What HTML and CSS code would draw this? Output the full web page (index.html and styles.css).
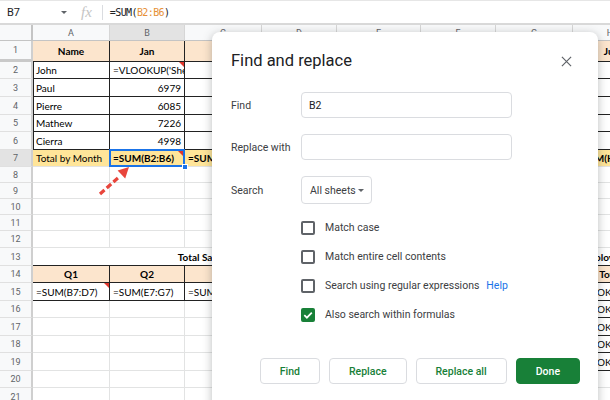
FILE: index.html
```html
<!DOCTYPE html>
<html lang="en">
<head>
<meta charset="utf-8">
<title>Find and replace</title>
<link rel="stylesheet" href="styles.css">
</head>
<body>
<div class="fbar">
  <div class="namebox">B7</div>
  <span class="nb-caret"></span>
  <div class="fx">fx</div>
  <div class="fsep"></div>
  <div class="formula">=SUM(<span class="fref">B2:B6</span>)</div>
</div>
<div class="sheet">
  <div class="r h16">
    <div class="corner"></div>
    <div class="ch">A</div><div class="ch hl">B</div><div class="ch">C</div><div class="ch">D</div><div class="ch">E</div><div class="ch">F</div><div class="ch">G</div><div class="ch">H</div>
  </div>
  <div class="r h21">
    <div class="h frz">1</div>
    <div class="c t or b ctr">Name</div><div class="c t or b ctr">Jan</div><div class="c t or b ctr">Feb</div><div class="c t or b ctr">Mar</div><div class="c t or b ctr">Apr</div><div class="c t or b ctr">May</div><div class="c t or b ctr">Jun</div><div class="c t or b ctr">Jul</div>
  </div>
  <div class="r h17">
    <div class="h">2</div>
    <div class="c t lb">John</div><div class="c t cm">=VLOOKUP('Sheet2'!A2,Sheet2!A:B,2,0)</div><div class="c t"></div><div class="c t"></div><div class="c t"></div><div class="c t"></div><div class="c t"></div><div class="c t"></div>
  </div>
  <div class="r h18">
    <div class="h">3</div>
    <div class="c t lb">Paul</div><div class="c t rt">6979</div><div class="c t"></div><div class="c t"></div><div class="c t"></div><div class="c t"></div><div class="c t"></div><div class="c t"></div>
  </div>
  <div class="r h18">
    <div class="h">4</div>
    <div class="c t lb">Pierre</div><div class="c t rt">6085</div><div class="c t"></div><div class="c t"></div><div class="c t"></div><div class="c t"></div><div class="c t"></div><div class="c t"></div>
  </div>
  <div class="r h17">
    <div class="h">5</div>
    <div class="c t lb">Mathew</div><div class="c t rt">7226</div><div class="c t"></div><div class="c t"></div><div class="c t"></div><div class="c t"></div><div class="c t"></div><div class="c t"></div>
  </div>
  <div class="r h18">
    <div class="h">6</div>
    <div class="c t lb">Cierra</div><div class="c t rt">4998</div><div class="c t"></div><div class="c t"></div><div class="c t"></div><div class="c t"></div><div class="c t"></div><div class="c t"></div>
  </div>
  <div class="r h17">
    <div class="h hl">7</div>
    <div class="c tr ye">Total by Month</div><div class="c tr ye b sel cm">=SUM(B2:B6)<span class="handle"></span></div><div class="c tr ye b">=SUM(C2:C6)</div><div class="c tr ye b">=SUM(D2:D6)</div><div class="c tr ye b">=SUM(E2:E6)</div><div class="c tr ye b">=SUM(F2:F6)</div><div class="c tr ye b">=SUM(G2:G6)</div><div class="c tr ye b">=SUM(H2:H6)</div>
  </div>
  <div class="r h16"><div class="h">8</div><div class="c"></div><div class="c"></div><div class="c"></div><div class="c"></div><div class="c"></div><div class="c"></div><div class="c"></div><div class="c"></div></div>
  <div class="r h16"><div class="h">9</div><div class="c"></div><div class="c"></div><div class="c"></div><div class="c"></div><div class="c"></div><div class="c"></div><div class="c"></div><div class="c"></div></div>
  <div class="r h16"><div class="h">10</div><div class="c"></div><div class="c"></div><div class="c"></div><div class="c"></div><div class="c"></div><div class="c"></div><div class="c"></div><div class="c"></div></div>
  <div class="r h16"><div class="h">11</div><div class="c"></div><div class="c"></div><div class="c"></div><div class="c"></div><div class="c"></div><div class="c"></div><div class="c"></div><div class="c"></div></div>
  <div class="r h17"><div class="h">12</div><div class="c"></div><div class="c"></div><div class="c"></div><div class="c"></div><div class="c"></div><div class="c"></div><div class="c"></div><div class="c"></div></div>
  <div class="r h18">
    <div class="h">13</div>
    <div class="c m5 b ctr tb">Total Sales by Quarter</div><div class="c"></div><div class="c"></div><div class="c b tb emp">Employee Status</div>
  </div>
  <div class="r h17">
    <div class="h">14</div>
    <div class="c t or b ctr">Q1</div><div class="c t or b ctr">Q2</div><div class="c t or b ctr">Q3</div><div class="c t or b ctr">Q4</div><div class="c"></div><div class="c"></div><div class="c"></div><div class="c tb or b ctr">Total</div>
  </div>
  <div class="r h18">
    <div class="h">15</div>
    <div class="c t cm">=SUM(B7:D7)</div><div class="c t">=SUM(E7:G7)</div><div class="c t">=SUM(H7:J7)</div><div class="c t">=SUM(K7:M7)</div><div class="c"></div><div class="c"></div><div class="c"></div><div class="c tb ok">OK</div>
  </div>
  <div class="r h17"><div class="h">16</div><div class="c"></div><div class="c"></div><div class="c"></div><div class="c"></div><div class="c"></div><div class="c"></div><div class="c"></div><div class="c tb ok">OK</div></div>
  <div class="r h18"><div class="h">17</div><div class="c"></div><div class="c"></div><div class="c"></div><div class="c"></div><div class="c"></div><div class="c"></div><div class="c"></div><div class="c tb ok">OK</div></div>
  <div class="r h17"><div class="h">18</div><div class="c"></div><div class="c"></div><div class="c"></div><div class="c"></div><div class="c"></div><div class="c"></div><div class="c"></div><div class="c tb ok">OK</div></div>
  <div class="r h18"><div class="h">19</div><div class="c"></div><div class="c"></div><div class="c"></div><div class="c"></div><div class="c"></div><div class="c"></div><div class="c"></div><div class="c tb ok">OK</div></div>
  <div class="r h17"><div class="h">20</div><div class="c"></div><div class="c"></div><div class="c"></div><div class="c"></div><div class="c"></div><div class="c"></div><div class="c"></div><div class="c"></div></div>
  <div class="r h18"><div class="h">21</div><div class="c"></div><div class="c"></div><div class="c"></div><div class="c"></div><div class="c"></div><div class="c"></div><div class="c"></div><div class="c"></div></div>
</div>

<svg class="arrow" width="40" height="38" viewBox="0 0 40 38" aria-hidden="true">
  <line x1="5" y1="32" x2="24" y2="15" stroke="#e8453c" stroke-width="3.2" stroke-dasharray="6 3"/>
  <polygon points="34,5 30.2,16.6 22.6,8.4" fill="#e8453c"/>
</svg>

<div class="dialog">
  <div class="dlg-head">
    <h1 class="dlg-title">Find and replace</h1>
    <svg class="close" width="11" height="11" viewBox="0 0 12 12" aria-hidden="true"><path d="M1 1L11 11M11 1L1 11" stroke="#5f6368" stroke-width="1.3" fill="none"/></svg>
  </div>
  <div class="form">
    <span class="lbl">Find</span><div class="inp">B2</div>
    <span class="lbl">Replace with</span><div class="inp"></div>
    <span class="lbl">Search</span><div class="select"><span>All sheets</span><span class="sel-caret"></span></div>
  </div>
  <div class="checks">
    <div class="chk"><span class="box"></span><span>Match case</span></div>
    <div class="chk"><span class="box"></span><span>Match entire cell contents</span></div>
    <div class="chk"><span class="box"></span><span>Search using regular expressions</span><span class="help">Help</span></div>
    <div class="chk"><span class="box on"><svg width="10" height="10" viewBox="0 0 10 10" aria-hidden="true"><path d="M1.3 5.2L3.9 7.7L8.8 2.6" stroke="#fff" stroke-width="1.7" fill="none"/></svg></span><span>Also search within formulas</span></div>
  </div>
  <div class="actions">
    <button class="btn">Find</button>
    <button class="btn">Replace</button>
    <button class="btn">Replace all</button>
    <button class="btn primary">Done</button>
  </div>
</div>
</body>
</html>
```
FILE: styles.css
```css
* { box-sizing: border-box; margin: 0; padding: 0; }
html, body { width: 610px; height: 400px; overflow: hidden; background: #fff; }
body { position: relative; font-family: Roboto, "Liberation Sans", Arial, sans-serif; color: #202124; }

/* formula bar */
.fbar { height: 25px; display: flex; align-items: center; border-top: 1px solid #e6e6e6; border-bottom: 2px solid #d9d9d9; }
.namebox { width: 61px; padding-left: 7px; font-size: 11px; color: #202124; }
.nb-caret { width: 0; height: 0; border-left: 3px solid transparent; border-right: 3px solid transparent; border-top: 3px solid #5f6368; }
.fx { margin-left: 14px; font-family: "Liberation Serif", serif; font-style: italic; font-size: 15px; line-height: 1; color: #c4c4c4; }
.fsep { margin-left: 10px; width: 1px; height: 15px; background: #dadce0; }
.formula { margin-left: 7px; font-family: "DejaVu Sans Mono", monospace; font-size: 10px; letter-spacing: -0.6px; color: #202124; }
.fref { color: #e69138; }

/* grid */
.sheet { width: 610px; overflow: hidden; }
.r { display: grid; grid-template-columns: 33px 77px 75px 77px 75px 84px 75px 77px 75px; width: 648px; }
.h16 { height: 16px; }
.h17 { height: 17px; }
.h18 { height: 18px; }
.h21 { height: 21px; }

.corner { background: #f8f9fa; border-right: 2px solid #c4c4c4; border-bottom: 1px solid #c4c4c4; }
.ch { background: #f8f9fa; border-right: 1px solid #d6d6d6; border-bottom: 1px solid #c4c4c4; font-size: 9px; color: #5f6368; display: flex; align-items: center; justify-content: center; }
.h { background: #f8f9fa; border-right: 2px solid #cfcfcf; border-bottom: 1px solid #e0e0e0; font-size: 9px; color: #5f6368; display: flex; align-items: center; justify-content: center; }
.hl { background: #e3e3e3; }
.frz { border-bottom: 3px solid #c9c9c9; }

.c { position: relative; display: flex; align-items: center; padding: 0 3px; overflow: hidden; white-space: nowrap; border-right: 1px solid #e2e3e3; border-bottom: 1px solid #e2e3e3; font-family: Lato, "Liberation Sans", sans-serif; font-size: 10px; color: #000; }
.t { border-right-color: #222; border-bottom-color: #222; }
.tr { border-right-color: #222; }
.tb { border-bottom-color: #222; }
.lb { box-shadow: inset 1px 0 0 #222; }
.or { background: #fce5cd; }
.ye { background: #ffe599; }
.b { font-weight: 700; }
.ctr { justify-content: center; }
.rt { justify-content: flex-end; }
.m5 { grid-column: span 5; }
.emp { padding-left: 8px; }
.ok { padding-left: 24px; }

.cm::after { content: ""; position: absolute; top: 0; right: 0; border-left: 5px solid transparent; border-top: 5px solid #e0362c; }
.sel { overflow: visible; z-index: 2; }
.sel::before { content: ""; position: absolute; left: -1px; top: -1px; right: -1px; bottom: -1px; border: 2px solid #1a73e8; }
.sel.cm::after { top: 1px; right: 1px; }
.handle { position: absolute; right: -4px; bottom: -4px; width: 6px; height: 6px; background: #1a73e8; border: 1px solid #fff; }

/* annotation arrow */
.arrow { position: absolute; left: 95px; top: 162px; }

/* dialog */
.dialog { position: absolute; left: 212px; top: 32px; width: 386px; height: 400px; background: #fff; border-radius: 8px; box-shadow: 0 2px 10px rgba(60, 64, 67, 0.35); padding: 0 18px 0 19px; }
.dlg-head { display: flex; align-items: center; justify-content: space-between; padding-top: 19px; padding-right: 8px; }
.dlg-title { font-family: Roboto, "Open Sans", sans-serif; font-weight: 400; font-size: 16.5px; line-height: 20px; color: #202124; }
.form { margin-top: 21px; display: grid; grid-template-columns: 70px 211px; row-gap: 16px; align-items: center; }
.lbl { font-size: 10.5px; color: #3c4043; }
.inp { height: 26px; border: 1px solid #dadce0; border-radius: 4px; padding-left: 7px; display: flex; align-items: center; font-size: 10.5px; color: #202124; }
.select { justify-self: start; width: 71px; height: 28px; border: 1px solid #dadce0; border-radius: 4px; padding: 0 7px 0 8px; display: flex; align-items: center; justify-content: space-between; font-size: 10.5px; color: #3c4043; }
.sel-caret { width: 0; height: 0; border-left: 3px solid transparent; border-right: 3px solid transparent; border-top: 3px solid #5f6368; }

.checks { margin-top: 9px; padding-left: 70px; }
.chk { height: 29px; display: flex; align-items: center; gap: 10px; font-size: 10.5px; color: #3c4043; }
.box { width: 14px; height: 14px; border: 2px solid #5f6368; border-radius: 2px; display: flex; align-items: center; justify-content: center; flex: none; }
.box.on { background: #188038; border-color: #188038; }
.help { margin-left: -3px; color: #1a73e8; }

.actions { margin-top: 29px; display: flex; justify-content: flex-end; gap: 9px; }
.btn { height: 26px; padding: 0 19px; border: 1px solid #dadce0; border-radius: 4px; background: #fff; color: #188038; font-family: Roboto, "Liberation Sans", sans-serif; font-size: 10.5px; font-weight: 500; }
.btn.primary { background: #188038; border-color: #188038; color: #fff; }
```
